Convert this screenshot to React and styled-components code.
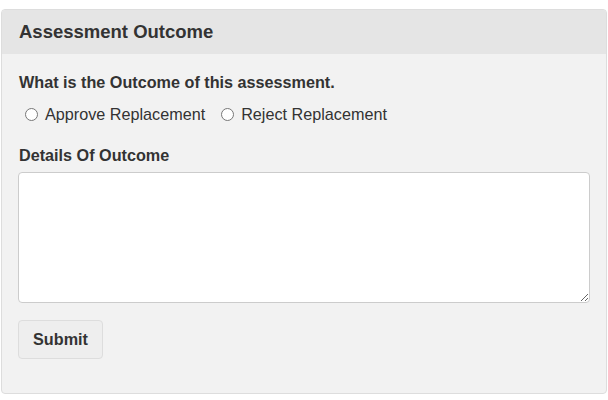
import React from "react";
import styled, { createGlobalStyle } from "styled-components";

const Global = createGlobalStyle`
  html, body { margin: 0; padding: 0; background: #ffffff; }
  body { font-family: "Liberation Sans", Arial, sans-serif; color: #333333; }
  * { box-sizing: border-box; }
`;

const Panel = styled.section`
  margin: 9px 1px 0 1px;
  width: 606px;
  height: 385px;
  background: #f2f2f2;
  border: 1px solid #dddddd;
  border-radius: 4px;
  overflow: hidden;
`;

const Header = styled.header`
  height: 44px;
  background: #e5e5e5;
  display: flex;
  align-items: center;
  padding: 0 17px;
  font-size: 18.5px;
  font-weight: bold;
  color: #333333;
`;

const Body = styled.div`
  padding: 19px 16px 0 16px;
  display: flex;
  flex-direction: column;
`;

const Label = styled.div`
  font-size: 16.2px;
  font-weight: bold;
  line-height: 18px;
  padding-left: 1px;
  color: #333333;
`;

const RadioRow = styled.div`
  display: flex;
  align-items: center;
  gap: 16px;
  margin: 11px 0 0 7px;
  height: 24px;
`;

const RadioLabel = styled.label`
  display: flex;
  align-items: center;
  gap: 7px;
  font-size: 16.2px;
  color: #333333;
`;

const Radio = styled.input.attrs({ type: "radio" })`
  margin: 0;
  width: 13px;
  height: 13px;
  appearance: none;
  border: 1px solid #777777;
  border-radius: 50%;
  background: #ffffff;
`;

const DetailsLabel = styled(Label)`
  margin-top: 20px;
`;

const TextArea = styled.textarea`
  margin-top: 8px;
  width: 572px;
  height: 131px;
  border: 1px solid #cccccc;
  border-radius: 4px;
  background: #ffffff;
  resize: vertical;
  font-family: "Liberation Sans", Arial, sans-serif;
`;

const Button = styled.button`
  margin-top: 17px;
  width: 85px;
  height: 39px;
  background: #eeeeee;
  border: 1px solid #dddddd;
  border-radius: 4px;
  font-family: "Liberation Sans", Arial, sans-serif;
  font-size: 16.2px;
  font-weight: bold;
  color: #333333;
  align-self: flex-start;
`;

export default function App() {
  return (
    <>
      <Global />
      <Panel>
        <Header>Assessment Outcome</Header>
        <Body>
          <Label>What is the Outcome of this assessment.</Label>
          <RadioRow>
            <RadioLabel>
              <Radio name="outcome" />
              Approve Replacement
            </RadioLabel>
            <RadioLabel>
              <Radio name="outcome" />
              Reject Replacement
            </RadioLabel>
          </RadioRow>
          <DetailsLabel>Details Of Outcome</DetailsLabel>
          <TextArea />
          <Button>Submit</Button>
        </Body>
      </Panel>
    </>
  );
}
